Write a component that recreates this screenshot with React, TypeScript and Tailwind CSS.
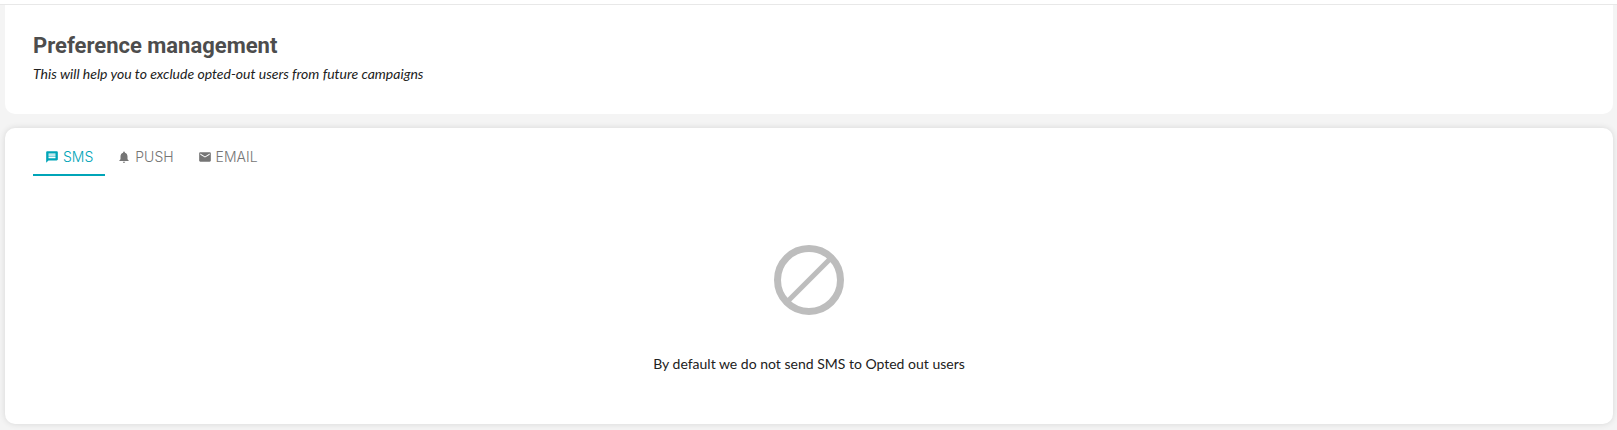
import { useState } from 'react';
import clsx from 'clsx';
import { MdEmail, MdMessage, MdNotifications } from 'react-icons/md';

const tabs = [
  { id: 'SMS', icon: MdMessage },
  { id: 'PUSH', icon: MdNotifications },
  { id: 'EMAIL', icon: MdEmail },
];

function BlockedIcon() {
  return (
    <svg
      viewBox="0 0 84 84"
      className="h-[84px] w-[84px] text-[#bdbdbd]"
      fill="none"
      stroke="currentColor"
      aria-hidden="true"
    >
      <circle cx="42" cy="42" r="31.5" strokeWidth="7" />
      <path d="M20 64L64 20" strokeWidth="5.2" />
    </svg>
  );
}

export default function App() {
  const [active, setActive] = useState('SMS');

  return (
    <div className="min-h-screen bg-[#f4f4f4] font-['Lato',sans-serif] text-[#212121]">
      <div className="h-[5px] border-b border-[#e8e8e8] bg-white" />
      <main className="flex flex-col gap-[14px] pr-1 pb-1.5 pl-[5px]">
        <header className="rounded-b-[10px] bg-white px-7 pt-6 pb-7">
          <h1 className="font-['Roboto',sans-serif] text-[22px] leading-[34px] font-bold text-[#4d4d4d]">
            Preference management
          </h1>
          <p className="pt-px pb-0.5 text-[14px] leading-5 italic">
            This will help you to exclude opted-out users from future campaigns
          </p>
        </header>

        <section className="rounded-[10px] bg-white px-7 pt-3 pb-[50px] shadow-[0_0_6px_rgba(0,0,0,0.12)]">
          <div role="tablist" className="flex">
            {tabs.map(({ id, icon: Icon }) => (
              <button
                key={id}
                type="button"
                role="tab"
                aria-selected={active === id}
                onClick={() => setActive(id)}
                className={clsx(
                  "flex h-9 items-center gap-1 border-b-2 px-3 font-['Inter',sans-serif] text-[14px] leading-5 font-light",
                  active === id
                    ? 'border-[#00a5b8] text-[#00a5b8]'
                    : 'border-transparent text-[#757575]'
                )}
              >
                <Icon className="h-[14px] w-[14px]" />
                {id}
              </button>
            ))}
          </div>

          <div role="tabpanel" className="flex flex-col items-center gap-8 pt-[62px]">
            <BlockedIcon />
            <p className="text-[14px] leading-5">
              By default we do not send {active} to Opted out users
            </p>
          </div>
        </section>
      </main>
    </div>
  );
}
